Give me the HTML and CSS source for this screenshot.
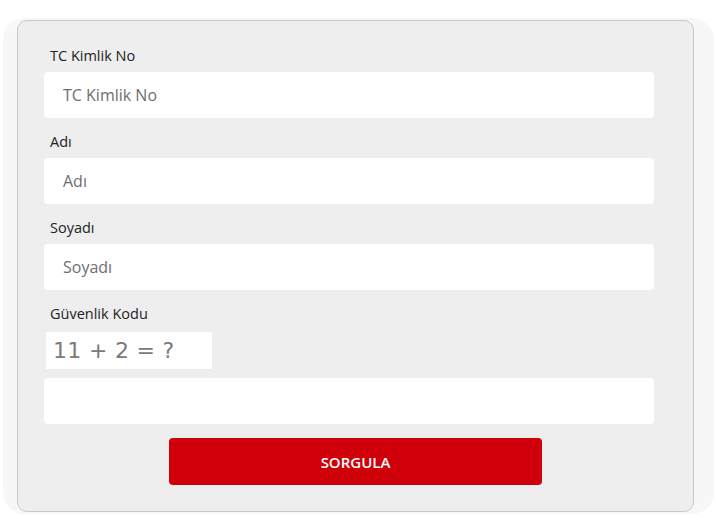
FILE: index.html
```html
<!DOCTYPE html>
<html lang="tr">
<head>
  <meta charset="UTF-8">
  <meta name="viewport" content="width=device-width, initial-scale=1.0">
  <title>Sorgulama</title>
  <link rel="stylesheet" href="styles.css">
</head>
<body>
  <div class="backdrop">
    <form class="card" id="sorguForm">
      <label class="field">
        <span>TC Kimlik No</span>
        <input type="text" name="tc" placeholder="TC Kimlik No">
      </label>
      <label class="field">
        <span>Adı</span>
        <input type="text" name="ad" placeholder="Adı">
      </label>
      <label class="field">
        <span>Soyadı</span>
        <input type="text" name="soyad" placeholder="Soyadı">
      </label>
      <div class="field">
        <span class="label">Güvenlik Kodu</span>
        <div class="captcha">11 + 2 = ?</div>
        <input type="text" name="kod">
      </div>
      <button type="submit">SORGULA</button>
    </form>
  </div>
</body>
</html>
```

FILE: styles.css
```css
body {
  font-family: 'Open Sans', sans-serif;
  background-color: #fff;
  color: #222;
  margin: 0;
  padding: 0;
}
.backdrop {
  margin: 18px 3px 12px 3px;
  padding: 2px 20px 2px 14px;
  background-color: #f7f7f7;
  border-radius: 22px;
}
.card {
  background-color: #eeeeee;
  border: 1px solid #c8c8c8;
  border-radius: 10px;
  padding: 25px 39px 26px 26px;
  display: flex;
  flex-direction: column;
  height: 492px;
  box-sizing: border-box;
}
.field {
  display: flex;
  flex-direction: column;
  margin-bottom: 14px;
}
.field span {
  font-size: 14.5px;
  line-height: 20px;
  padding-left: 6px;
  margin-bottom: 6px;
}
.field input {
  height: 46px;
  box-sizing: border-box;
  border: none;
  border-radius: 4px;
  background-color: #fff;
  padding: 0 19px;
  font-family: 'Open Sans', sans-serif;
  font-size: 16px;
  color: #333;
  outline: none;
}
.field input::placeholder {
  color: #6e6e6e;
}
.captcha {
  width: 166px;
  height: 37px;
  margin: 2px 0 9px 2px;
  background-color: #fff;
  color: #7a7a7a;
  font-family: 'DejaVu Sans', sans-serif;
  font-size: 22px;
  line-height: 37px;
  padding-left: 7px;
  box-sizing: border-box;
  letter-spacing: 0.3px;
}
button {
  align-self: center;
  width: 373px;
  height: 47px;
  margin-left: 13px;
  background-color: #d0000b;
  color: #fff;
  border: none;
  border-radius: 4px;
  font-family: 'Open Sans', sans-serif;
  font-size: 15px;
  font-weight: 600;
  cursor: pointer;
}
```
